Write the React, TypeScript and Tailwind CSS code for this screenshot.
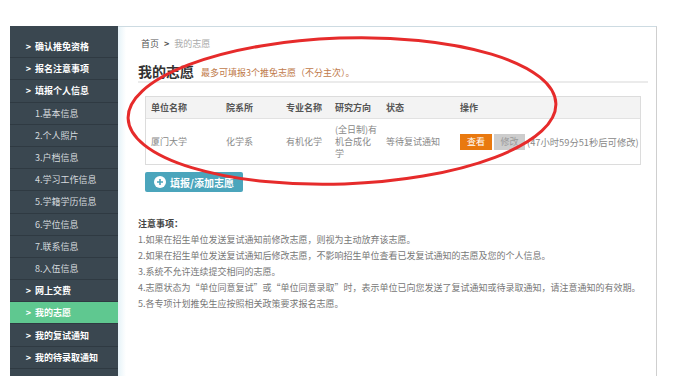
import React from 'react'

const font = { fontFamily: '"Noto Sans CJK SC", "Noto Sans", sans-serif' }

type NavItem = { label: string; main?: boolean; active?: boolean }

const nav: NavItem[] = [
  { label: '确认推免资格', main: true },
  { label: '报名注意事项', main: true },
  { label: '填报个人信息', main: true },
  { label: '1.基本信息' },
  { label: '2.个人照片' },
  { label: '3.户档信息' },
  { label: '4.学习工作信息' },
  { label: '5.学籍学历信息' },
  { label: '6.学位信息' },
  { label: '7.联系信息' },
  { label: '8.入伍信息' },
  { label: '网上交费', main: true },
  { label: '我的志愿', main: true, active: true },
  { label: '我的复试通知', main: true },
  { label: '我的待录取通知', main: true },
]

const notes = [
  '1.如果在招生单位发送复试通知前修改志愿，则视为主动放弃该志愿。',
  '2.如果在招生单位发送复试通知后修改志愿，不影响招生单位查看已发复试通知的志愿及您的个人信息。',
  '3.系统不允许连续提交相同的志愿。',
  '4.志愿状态为“单位同意复试”或“单位同意录取”时，表示单位已向您发送了复试通知或待录取通知，请注意通知的有效期。',
  '5.各专项计划推免生应按照相关政策要求报名志愿。',
]

function Sidebar() {
  return (
    <div className="w-[108px] shrink-0 bg-[#3a4750] pt-[10px]">
      {nav.map((n) => (
        <div
          key={n.label}
          className={
            'h-[22.2px] flex items-center border-b border-[#2f3a42] text-[9px] leading-none ' +
            (n.active ? 'bg-[#5fc890] text-white font-bold' : n.main ? 'text-white font-bold' : 'text-[#d5dade]')
          }
        >
          {n.main ? (
            <>
              <span className="w-[25px] text-right pr-[4px]">&gt;</span>
              <span>{n.label}</span>
            </>
          ) : (
            <span className="pl-[25px]">{n.label}</span>
          )}
        </div>
      ))}
    </div>
  )
}

function Table() {
  return (
    <div className="ml-[7px] w-[496px] border border-[#dcdcdc] text-[9px] leading-[12px]">
      <div className="h-[22px] flex items-center bg-[#f3f3f3] text-[#555] font-semibold border-b border-[#e2e2e2]">
        <div className="w-[80px] pl-[5px]">单位名称</div>
        <div className="w-[60px]">院系所</div>
        <div className="w-[49px]">专业名称</div>
        <div className="w-[51px]">研究方向</div>
        <div className="w-[74px]">状态</div>
        <div className="flex-1">操作</div>
      </div>
      <div className="h-[45px] flex items-center text-[#888]">
        <div className="w-[80px] pl-[5px]">厦门大学</div>
        <div className="w-[60px]">化学系</div>
        <div className="w-[49px]">有机化学</div>
        <div className="w-[51px] whitespace-nowrap">
          (全日制)有
          <br />
          机合成化
          <br />
          学
        </div>
        <div className="w-[74px]">等待复试通知</div>
        <div className="flex-1 flex items-center gap-[2px]">
          <span className="w-[32px] h-[16px] flex items-center justify-center bg-[#e9790f] text-white">查看</span>
          <span className="w-[31px] h-[16px] flex items-center justify-center bg-[#cdcdcd] text-[#9a9a9a]">修改</span>
          <span className="text-[#888] text-[9.3px]">(47小时59分51秒后可修改)</span>
        </div>
      </div>
    </div>
  )
}

function Content() {
  return (
    <div className="w-[539px] shrink-0 border-t border-r border-t-[#cddbe2] border-r-[#cfcfcf] bg-[linear-gradient(to_right,#e6f3f8,#ffffff_8px)] pl-[20px]">
      <div className="mt-[11px] ml-[3px] h-[10px] flex items-center gap-[5px] text-[9px] leading-none">
        <span className="text-[#555]">首页</span>
        <span className="text-[#555] font-bold">&gt;</span>
        <span className="text-[#aaa]">我的志愿</span>
      </div>
      <div className="mt-[14px] flex items-end gap-[7px] h-[18px]">
        <span className="text-[14px] leading-[18px] font-bold text-[#333]">我的志愿</span>
        <span className="text-[9px] leading-[14px] text-[#c07a4a]">最多可填报3个推免志愿（不分主次）。</span>
      </div>
      <div className="mt-[1px] w-[510px] h-[2px] bg-[#ebebeb]" />
      <div className="mt-[13px]">
        <Table />
      </div>
      <div className="mt-[7px] ml-[7px] w-[98px] h-[20px] rounded-[2px] bg-[#4ba5bc] flex items-center justify-center gap-[4px] text-white text-[10px] font-bold">
        <svg width="12" height="12" viewBox="0 0 12 12">
          <circle cx="6" cy="6" r="6" fill="#fff" />
          <path d="M6 3v6M3 6h6" stroke="#4ba5bc" strokeWidth="1.6" />
        </svg>
        <span>填报/添加志愿</span>
      </div>
      <div className="mt-[24px] text-[9px] leading-[16px] text-[#777]">
        <div className="text-[#444] font-semibold">注意事项：</div>
        {notes.map((n) => (
          <div key={n} className="whitespace-nowrap">{n}</div>
        ))}
      </div>
    </div>
  )
}

export default function App() {
  return (
    <div className="relative w-[694px] h-[376px] overflow-hidden bg-white" style={font}>
      <div className="h-[26px]" />
      <div className="flex h-[350px] pl-[10px]">
        <Sidebar />
        <Content />
      </div>
      <svg className="absolute left-0 top-0 pointer-events-none" width="694" height="376">
        <ellipse
          cx="342"
          cy="111"
          rx="214"
          ry="73"
          transform="rotate(-2 342 111)"
          fill="none"
          stroke="#e62b2b"
          strokeWidth="3"
        />
      </svg>
    </div>
  )
}
